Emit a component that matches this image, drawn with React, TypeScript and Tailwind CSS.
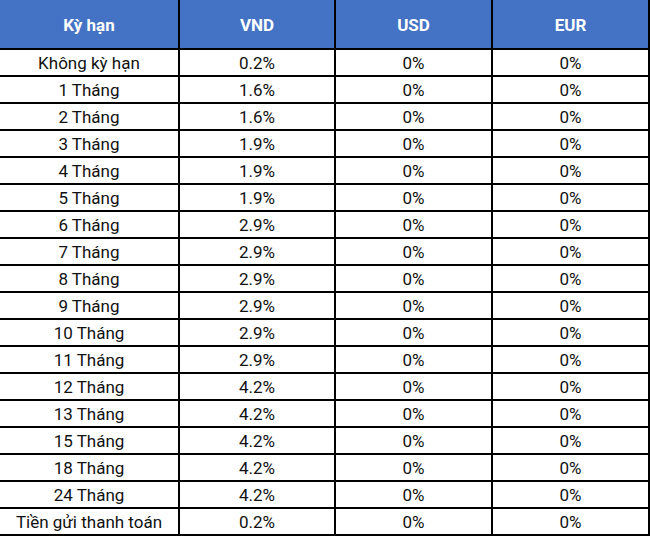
const rows: [string, string][] = [
  ["Không kỳ hạn", "0.2%"],
  ["1 Tháng", "1.6%"],
  ["2 Tháng", "1.6%"],
  ["3 Tháng", "1.9%"],
  ["4 Tháng", "1.9%"],
  ["5 Tháng", "1.9%"],
  ["6 Tháng", "2.9%"],
  ["7 Tháng", "2.9%"],
  ["8 Tháng", "2.9%"],
  ["9 Tháng", "2.9%"],
  ["10 Tháng", "2.9%"],
  ["11 Tháng", "2.9%"],
  ["12 Tháng", "4.2%"],
  ["13 Tháng", "4.2%"],
  ["15 Tháng", "4.2%"],
  ["18 Tháng", "4.2%"],
  ["24 Tháng", "4.2%"],
  ["Tiền gửi thanh toán", "0.2%"],
];

const headers = ["Kỳ hạn", "VND", "USD", "EUR"];

export default function App() {
  return (
    <div className="w-[650px] h-[536px] bg-white font-['Roboto',sans-serif]">
      <div className="grid grid-cols-[178px_154px_155px_155px] grid-rows-[48px] auto-rows-[25px] gap-[2px] bg-black pr-[2px] pb-[2px] w-[650px]">
        {headers.map((h) => (
          <div
            key={h}
            className="flex items-center justify-center pt-[3px] bg-[#4472c4] text-white font-bold text-[17px]"
          >
            {h}
          </div>
        ))}
        {rows.map(([term, vnd]) => (
          <div key={term} className="contents">
            <div className="flex items-center justify-center pt-[3px] bg-white text-[17px] text-[#111]">{term}</div>
            <div className="flex items-center justify-center pt-[3px] bg-white text-[17px] text-[#111]">{vnd}</div>
            <div className="flex items-center justify-center pt-[3px] bg-white text-[17px] text-[#111]">0%</div>
            <div className="flex items-center justify-center pt-[3px] bg-white text-[17px] text-[#111]">0%</div>
          </div>
        ))}
      </div>
    </div>
  );
}
